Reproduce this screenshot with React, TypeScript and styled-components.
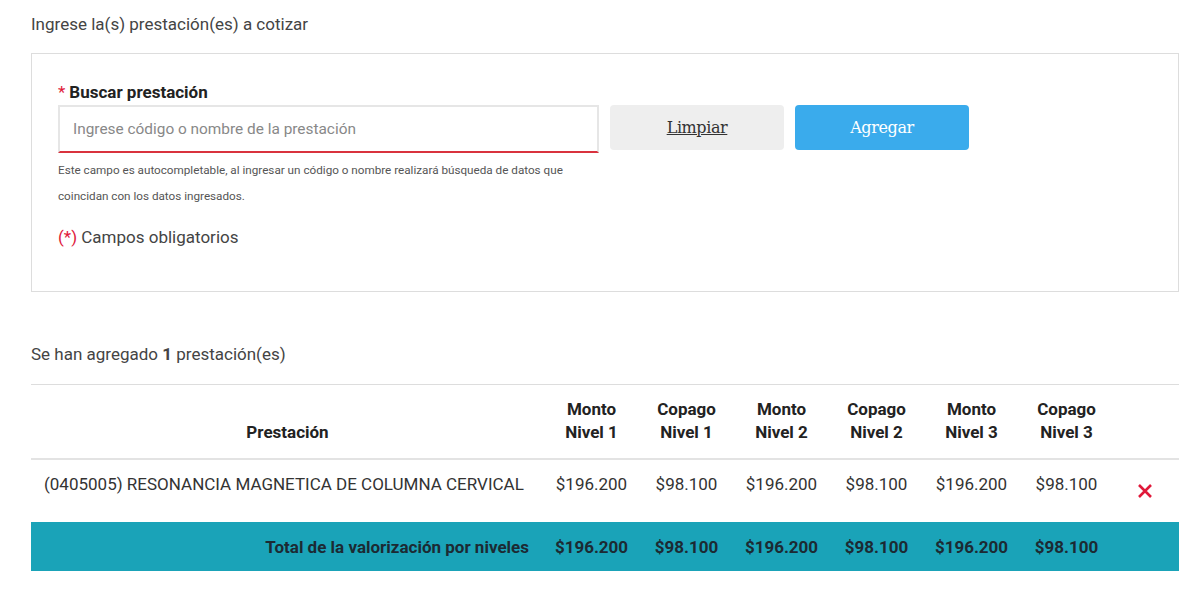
import * as React from "react"
import styled, { createGlobalStyle } from "styled-components"

const GlobalStyle = createGlobalStyle`
  body {
    margin: 0;
    background: #ffffff;
    font-family: Roboto, "Noto Sans", sans-serif;
    color: #333333;
  }
`

const Page = styled.div`
  padding: 12px 21px 0 31px;
`

const SectionTitle = styled.p`
  margin: 0 0 17px;
  font-size: 17px;
  line-height: 24px;
  color: #444444;
`

const FormCard = styled.div`
  border: 1px solid #dddddd;
  padding: 26px 26px 35px;
  height: 239px;
  box-sizing: border-box;
`

const FieldLabel = styled.div`
  font-size: 17px;
  font-weight: 700;
  line-height: 24px;
  color: #222222;
  margin-bottom: 1px;
`

const Star = styled.span`
  color: #e0193a;
  font-weight: 400;
  margin-right: 4px;
`

const InputRow = styled.div`
  display: flex;
  align-items: flex-start;
  gap: 11px;
`

const SearchInput = styled.input`
  width: 541px;
  height: 48px;
  box-sizing: border-box;
  border: 2px solid #e6e6e6;
  border-bottom: 2px solid #d9323e;
  padding: 0 13px;
  font-family: Roboto, sans-serif;
  font-size: 15.4px;
  color: #333333;
  outline: none;
  &::placeholder {
    color: #888888;
  }
`

const ActionButton = styled.button<{ $primary?: boolean }>`
  width: 174px;
  height: 45px;
  border: none;
  border-radius: 4px;
  font-family: "DejaVu Serif", "Liberation Serif", serif;
  font-size: 16px;
  letter-spacing: -0.4px;
  cursor: pointer;
  background: ${(p) => (p.$primary ? "#3aabec" : "#eeeeee")};
  color: ${(p) => (p.$primary ? "#ffffff" : "#333333")};
  text-decoration: ${(p) => (p.$primary ? "none" : "underline")};
`

const HelpText = styled.p`
  margin: 4px 0 0;
  width: 520px;
  font-size: 11.7px;
  line-height: 26px;
  color: #555555;
`

const Required = styled.p`
  margin: 16px 0 0;
  font-size: 17px;
  line-height: 24px;
  color: #444444;
`

const RedMark = styled.span`
  color: #e0193a;
`

const AddedText = styled.p`
  margin: 50px 0 18px;
  font-size: 17px;
  line-height: 24px;
  color: #444444;
`

const Table = styled.table`
  width: 1148px;
  border-collapse: collapse;
  table-layout: fixed;
  border-top: 1px solid #dddddd;
`

const HeadCell = styled.th`
  padding: 13px 4px 14px;
  vertical-align: bottom;
  font-size: 17px;
  font-weight: 700;
  line-height: 23px;
  color: #222222;
  text-align: center;
  border-bottom: 2px solid #e3e3e3;
`

const Cell = styled.td<{ $left?: boolean }>`
  height: 63px;
  box-sizing: border-box;
  vertical-align: top;
  padding: 12px ${(p) => (p.$left ? "13px" : "2px")} 0;
  font-size: 17px;
  line-height: 24px;
  color: #333333;
  text-align: ${(p) => (p.$left ? "left" : "center")};
  white-space: nowrap;
`

const TotalRow = styled.tr`
  background: #1aa3b8;
`

const TotalCell = styled.td<{ $right?: boolean }>`
  height: 49px;
  box-sizing: border-box;
  padding: 0 ${(p) => (p.$right ? "15px" : "2px")};
  font-size: 17px;
  font-weight: 700;
  color: #1c2a33;
  text-align: ${(p) => (p.$right ? "right" : "center")};
  white-space: nowrap;
`

const RemoveButton = styled.button`
  border: none;
  background: none;
  padding: 0;
  margin: 11px 3px 0 0;
  cursor: pointer;
  display: inline-flex;
`

const RemoveIcon = () => (
  <svg width="16" height="16" viewBox="0 0 16 16">
    <path d="M2 2 L14 14 M14 2 L2 14" stroke="#e0193a" strokeWidth="2.6" />
  </svg>
)

const levels = [
  ["Monto", "Nivel 1"],
  ["Copago", "Nivel 1"],
  ["Monto", "Nivel 2"],
  ["Copago", "Nivel 2"],
  ["Monto", "Nivel 3"],
  ["Copago", "Nivel 3"],
]

const values = ["$196.200", "$98.100", "$196.200", "$98.100", "$196.200", "$98.100"]

export default function App() {
  return (
    <Page>
      <GlobalStyle />
      <SectionTitle>Ingrese la(s) prestación(es) a cotizar</SectionTitle>
      <FormCard>
        <FieldLabel>
          <Star>*</Star>Buscar prestación
        </FieldLabel>
        <InputRow>
          <SearchInput placeholder="Ingrese código o nombre de la prestación" />
          <ActionButton>Limpiar</ActionButton>
          <ActionButton $primary>Agregar</ActionButton>
        </InputRow>
        <HelpText>
          Este campo es autocompletable, al ingresar un código o nombre realizará búsqueda de datos que
          coincidan con los datos ingresados.
        </HelpText>
        <Required>
          <RedMark>(*)</RedMark> Campos obligatorios
        </Required>
      </FormCard>
      <AddedText>
        Se han agregado <b>1</b> prestación(es)
      </AddedText>
      <Table>
        <colgroup>
          <col style={{ width: 513 }} />
          {levels.map((_, i) => (
            <col key={i} style={{ width: 95 }} />
          ))}
          <col style={{ width: 65 }} />
        </colgroup>
        <thead>
          <tr>
            <HeadCell>Prestación</HeadCell>
            {levels.map(([a, b], i) => (
              <HeadCell key={i}>
                {a}
                <br />
                {b}
              </HeadCell>
            ))}
            <HeadCell />
          </tr>
        </thead>
        <tbody>
          <tr>
            <Cell $left>(0405005) RESONANCIA MAGNETICA DE COLUMNA CERVICAL</Cell>
            {values.map((v, i) => (
              <Cell key={i}>{v}</Cell>
            ))}
            <Cell>
              <RemoveButton aria-label="Eliminar">
                <RemoveIcon />
              </RemoveButton>
            </Cell>
          </tr>
          <TotalRow>
            <TotalCell $right>Total de la valorización por niveles</TotalCell>
            {values.map((v, i) => (
              <TotalCell key={i}>{v}</TotalCell>
            ))}
            <TotalCell />
          </TotalRow>
        </tbody>
      </Table>
    </Page>
  )
}
